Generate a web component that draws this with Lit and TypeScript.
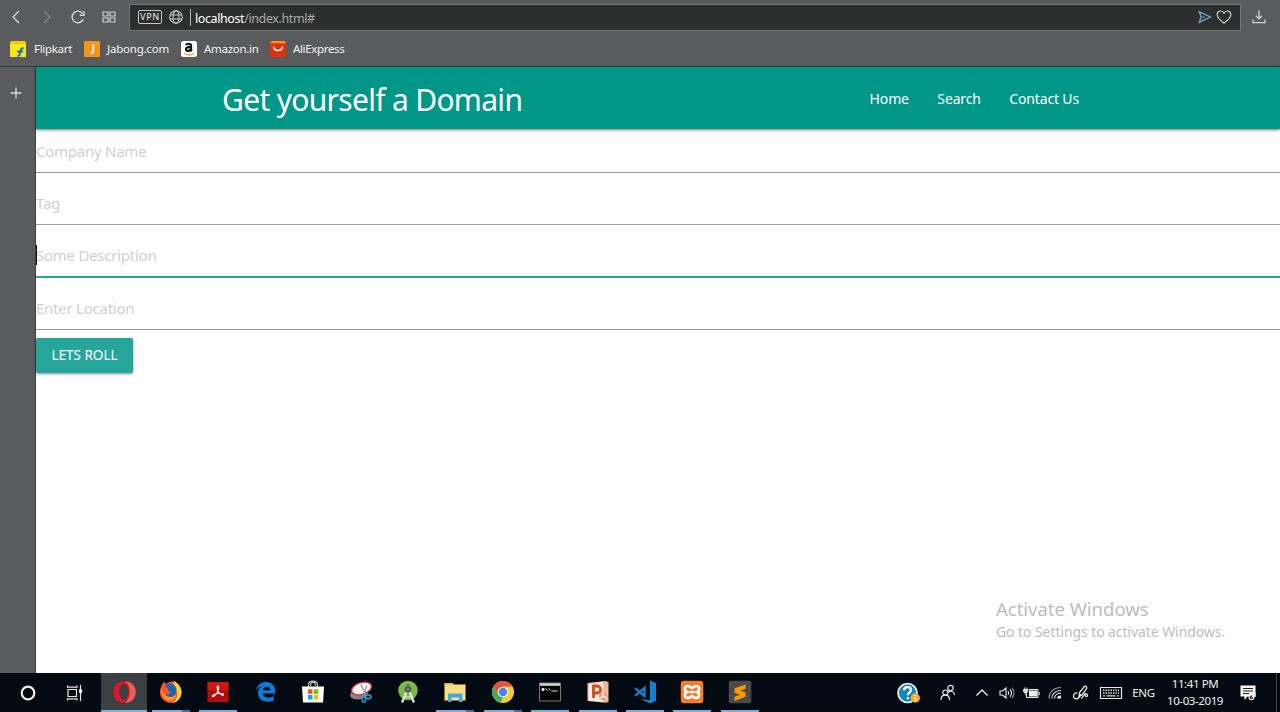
import { LitElement, html, css, svg } from "lit";
import { customElement } from "lit/decorators.js";

const icon = (w: number, h: number, body: unknown) =>
  html`<svg width=${w} height=${h} viewBox="0 0 ${w} ${h}" fill="none">${body}</svg>`;

const ui = {
  back: icon(16, 16, svg`<path d="M11 2 5 8l6 6" stroke="#d6d6d6" stroke-width="1.4"/>`),
  forward: icon(16, 16, svg`<path d="M5 2l6 6-6 6" stroke="#858687" stroke-width="1.4"/>`),
  reload: icon(16, 16, svg`<path d="M13.2 10.2A5.8 5.8 0 1 1 12.6 4.6" stroke="#d6d6d6" stroke-width="1.4"/><path d="M14 2v4.2H9.8" stroke="#d6d6d6" stroke-width="1.4"/>`),
  grid: icon(16, 16, svg`<path d="M2 3h5v4H2zM9 3h5v4H9zM2 9h5v4H2zM9 9h5v4H9z" stroke="#cfcfcf" stroke-width="1.2"/>`),
  globe: icon(16, 16, svg`<g stroke="#c9caca" stroke-width="1.1"><circle cx="8" cy="8" r="6.3"/><ellipse cx="8" cy="8" rx="3" ry="6.3"/><path d="M2 6h12M2 10h12"/></g>`),
  send: icon(16, 16, svg`<path d="M2.3 2.8 13.5 8 2.3 13.2 4 8z" stroke="#6fa9c6" stroke-width="1.3"/><path d="M4 8h4" stroke="#6fa9c6"/>`),
  heart: icon(16, 16, svg`<path d="M8 14.2C5 12 1.2 9 1.2 5.6 1.2 1.6 6.2.7 8 4.2 9.8.7 14.8 1.6 14.8 5.6 14.8 9 11 12 8 14.2z" stroke="#c4c4c4" stroke-width="1.2"/>`),
  download: icon(16, 16, svg`<path d="M8 1.5v8M5 6.800 8 9.800l3-3M2 10.500v3.200h12v-3.200" stroke="#d2d2d2" stroke-width="1.3"/>`),
  plus: icon(12, 12, svg`<path d="M6 .5v11M.5 6h11" stroke="#d8d8d8" stroke-width="1.3"/>`),
};

const bookmarks = [
  {
    label: "Flipkart", cls: "flipkart",
    glyph: icon(16, 16, svg`<path d="M0 1.500 1.500 0h13L16 1.500V16H0z" fill="#f8e71b"/><path d="M0 3 1.500 0h13L16 3z" fill="#f2c90e"/><path d="M7.500 15c1.500 0 2.300-1 2.700-3l.5-2.500c.3-1.700 1.200-2.500 3-2.300M7 10.600h6" stroke="#1f74ba" stroke-width="2"/>`),
  },
  {
    label: "Jabong.com", cls: "jabong",
    glyph: icon(16, 16, svg`<rect width="16" height="16" rx="1" fill="#f7941e"/><path d="M9.300 3.200v6.600c0 1.600-.9 2.300-2.800 2" stroke="#fff" stroke-width="1.800"/>`),
  },
  {
    label: "Amazon.in", cls: "amazon",
    glyph: icon(16, 16, svg`<rect width="16" height="16" rx="2.500" fill="#fff"/><path d="M5 4.300C5.600 2.300 10 2 10 4.800v3.700c0 .8.400 1.200 1 1.700M10 5.800c-3 0-5 .5-5 2.400 0 2.500 4.500 2.200 5-.7" stroke="#111" stroke-width="2.200"/><path d="M3 12.300c3 2.200 7.300 2.200 10 .2" stroke="#f5a11c" stroke-width="1.300"/>`),
  },
  {
    label: "AliExpress", cls: "ali",
    glyph: icon(16, 16, svg`<rect width="16" height="16" rx="2.500" fill="#e4310c"/><path d="M1.500 0h13L16 2.200H0z" fill="#f49a16"/><path d="M3.600 5.700c.6 5.200 8.200 5.200 8.800 0" stroke="#fff" stroke-width="1.500"/>`),
  },
];

const start = [
  icon(24, 24, svg`<circle cx="12" cy="12" r="6.300" stroke="#f2f2f2" stroke-width="2.200"/>`),
  icon(24, 24, svg`<g stroke="#e8e8e8" stroke-width="1.200"><path d="M5 8.500h8.500v7H5zM4.500 4.500v1.700h9.500V4.500M4.500 19.500v-1.700h9.500v1.700M17.500 4v16"/></g><path d="M16 8.500h3.200v3.200H16z" fill="#fff"/>`),
];

const apps = [
  { state: "active", glyph: icon(24, 24, svg`<circle cx="12" cy="12" r="10.800" fill="#d9182b"/><path d="M13 1.200a10.800 10.800 0 0 1 0 21.600c3-2 4.800-6 4.800-10.800S16 3.200 13 1.200z" fill="#f35b55"/><ellipse cx="12" cy="12" rx="4.600" ry="8" fill="#3c4043"/>`) },
  { state: "running stacked", glyph: icon(24, 24, svg`<path d="M3 5 5 1.500 7 4c3-3 7-2.500 8-2.500 4 1.500 8 6 7.500 11.500C22 19 17.500 23 12 23S1 18.500 1 12.500C1 9 2 6.500 3 5z" fill="#f4562b"/><path d="M15 1c3 1.500 8 6 7.500 12-.5 5-4 9-9 10 4-3 6-8 4-12C16 7 14 5 15 1z" fill="#ffcf2f"/><path d="M6 5.500C9 2 15 3 17 7.500c1.500 4-.5 9-4.500 9.500-3 .5-5.500-1-6-3l3 .5 3-2.500-3-1-.5-2.500z" fill="#1767b5"/><path d="M2.500 7c0 5 3.500 10 9.500 10 3 0 4.500-2 5-3 .5 5-4 7.500-8 6.500C4 19 1.500 13 2.500 7z" fill="#ff9424"/>`) },
  { state: "running", glyph: icon(24, 24, svg`<path d="M1.500 2h21v20h-21z" fill="#b40b0c"/><path d="M1.500 2h21v8h-21z" fill="#cf1711"/><path d="M11.600 6c1.900 0 .8 4.500-1.100 7.500-1.500 2.300-3.300 3.700-4 2.900-.8-1.200 3.200-2.700 6.900-2.900 2.900-.2 4.700.6 4 1.500-1 1.200-4.400-1.300-5.600-4.500-.8-2.300-.8-4.500-.2-4.500z" stroke="#fff" stroke-width="1.100"/>`) },
  { state: "", glyph: icon(24, 24, svg`<path d="M2.200 10.700C3 5 7 2 12 2c5.800 0 9.300 4 9.300 9v2.600H8.600c.3 4.400 6.500 5.300 11.200 2.500v4.300c-7 3.400-15.800.7-15.800-7.300 0-3.300 2-5.900 5-7.300C5.600 6.600 3.500 8.200 2.200 10.700zM8.900 10.200h7.400c0-4.600-6.700-4.600-7.400 0z" fill="#0d7bdb"/>`) },
  { state: "", glyph: icon(24, 24, svg`<path d="M7.500 7V4.500c0-4.500 9-4.500 9 0V7M9.700 6V4c0-2.300 4.600-2.300 4.600 0v2" stroke="#bfc2c5" stroke-width="1.200"/><path d="M1 6.500h22L22 22.500H2z" fill="#fff"/><path d="M7 9.300h4.500v4.500H7z" fill="#f25022"/><path d="M12.800 9.300h4.500v4.500h-4.500z" fill="#7fba00"/><path d="M7 15h4.500v4.500H7z" fill="#00a4ef"/><path d="M12.800 15h4.500v4.500h-4.500z" fill="#ffb900"/>`) },
  { state: "", glyph: icon(24, 24, svg`<ellipse cx="10" cy="14.500" rx="9" ry="4.800" transform="rotate(-8 10 14.500)" fill="#8b8585"/><ellipse cx="12.500" cy="8.500" rx="10.300" ry="5.800" transform="rotate(-17 12.500 8.500)" fill="#f7f4f5" stroke="#c63542" stroke-width="1.300"/><path d="M12 4.500 17.200 16M17.800 5.500 14.500 17" stroke="#8496a3" stroke-width="1.200"/><ellipse cx="14.800" cy="19.500" rx="1.700" ry="2.700" stroke="#2c91be" stroke-width="1.700"/><ellipse cx="19.300" cy="16.800" rx="2.700" ry="2" stroke="#2c91be" stroke-width="1.700"/>`) },
  { state: "", glyph: icon(24, 24, svg`<circle cx="12" cy="10.500" r="9.800" fill="#78b94a"/><path d="M10.700 11.500 6 22.500M13.300 11.500 18 22.500" stroke="#e7e9e7" stroke-width="2.200"/><path d="M8 16q4 2.500 8 0" stroke="#e7e9e7" stroke-width="1.200"/><circle cx="12" cy="9.500" r="3.300" fill="#4b5a4e"/><circle cx="12" cy="9.500" r="1.200" fill="#84a271"/><path d="M12 4.500v2" stroke="#4b5a4e" stroke-width="2"/>`) },
  { state: "running stacked", glyph: icon(24, 24, svg`<path d="M1.500 3h8l1.500 1.500h11.500v16H1.500z" fill="#fbdf87"/><path d="M1.500 3h8l1 2h-9z" fill="#e9b93e"/><path d="M5 22v-8.500h14.500V22H16v-4.500H8.500V22z" fill="#45a9de"/>`) },
  { state: "running stacked", glyph: icon(24, 24, svg`<circle cx="12" cy="12" r="11" fill="#f9cd32"/><path d="M2.500 6.500A11 11 0 0 1 21.500 6.500H12L7.200 14.500z" fill="#e35243"/><path d="M2.500 6.500 7.500 15l4.500 2-2 5.800A11 11 0 0 1 2.500 6.500z" fill="#4aa85c"/><circle cx="12" cy="12" r="5.300" fill="#f4f4f4"/><circle cx="12" cy="12" r="4.200" fill="#4384ee"/>`) },
  { state: "running", glyph: icon(24, 24, svg`<path d="M1.500 3h21v18h-21z" fill="#050505" stroke="#777"/><path d="M2 3.200h20v2.600H2z" fill="#d4d4d4"/><path d="M4 8.500h2v2H4zM7.500 8.300l2 2.400M10.800 8.300l1.500 2.400M13.500 11h6" fill="#ddd" stroke="#ddd"/>`) },
  { state: "running", glyph: icon(24, 24, svg`<path d="M1.500 3 19 1l3.500 1v20l-3 .8L1.500 21z" fill="#f3b79f"/><path d="M2.500 4 17 2v20l-14.500-1.500z" fill="#fbece5"/><path d="M7.500 18V6h2.800c5.700 0 5.700 7 0 7H8" stroke="#cf4a1c" stroke-width="2.800"/><circle cx="17" cy="16" r="4.200" fill="#ea9c7e"/><path d="M17 16v-4M17 16l3.500 2M17 16l-3 2.500" stroke="#fff" stroke-width="1.100"/>`) },
  { state: "running", glyph: icon(24, 24, svg`<path d="m17 .5 6 2.500v18l-6 2.500L7.500 19 17 20.200z" fill="#1681cf"/><path d="M2 8.200 11.500 16V8L2 15.800" stroke="#1681cf" stroke-width="2.300"/>`) },
  { state: "running", glyph: icon(24, 24, svg`<rect x=".8" y=".8" width="22.500" height="22.500" rx="3" fill="#f47c2b"/><path d="M8 6c-4 0-4 5-1 6-3 1-3 6 1 6 2.500 0 2.500-2 4-2s1.500 2 4 2c4 0 4-5 1-6 3-1 3-6-1-6-2.500 0-2.500 2-4 2s-1.500-2-4-2z" stroke="#fff" stroke-width="2.600"/><path d="M10 12h4" stroke="#fff" stroke-width="2.400"/>`) },
  { state: "running", glyph: icon(24, 24, svg`<rect x=".8" y=".8" width="22.500" height="22.500" rx="1.500" fill="#4b4b4c"/><path d="m6.500 8.500 11-4v4.200l-5.200 2 5.200 1.700v4.300l-11 4.300v-4.300l5.300-2-5.300-2z" fill="#ff9a00"/>`) },
];

const tray = {
  help: icon(24, 24, svg`<circle cx="11.500" cy="12" r="9.500" fill="#1787bf" stroke="#f1f4f6" stroke-width="1.700"/><path d="M8 9.300c.2-4.300 7-4 7-.3 0 2.500-3.200 2.700-3.200 5.300M11.800 16v2.300" stroke="#fff" stroke-width="2.200"/><circle cx="19.300" cy="17" r="4.700" fill="#f4ae2b"/><path d="M19.300 14v1.300M19.300 16.300v3.500" stroke="#fff3cf" stroke-width="1.300"/>`),
  people: icon(18, 18, svg`<g stroke="#e6e6e6" stroke-width="1.200"><circle cx="11.500" cy="4" r="2.700"/><circle cx="6.300" cy="8.500" r="2.500"/><path d="M2 16c0-6.500 8.500-6.500 8.500 0M9.300 8.500c2.500-2.500 6-1 6.200 2.500"/></g>`),
  chevron: icon(16, 16, svg`<path d="M2.500 10.500 8 5l5.500 5.500" stroke="#eee" stroke-width="1.300"/>`),
  volume: icon(18, 16, svg`<path d="M2 6h2.500L8 3v10l-3.500-3H2z" stroke="#eee" stroke-width="1.100"/><path d="M10 6q1.500 2 0 4M12 4.200q3 3.800 0 7.600" stroke="#eee" stroke-width="1.100"/><path d="M14 2.700q4 5.300 0 10.600" stroke="#888" stroke-width="1.100"/>`),
  battery: icon(18, 16, svg`<path d="M7 5.500h8.300v6H7z" fill="#f2f2f2"/><path d="M6.500 4.500h9.500v8H4.500V9M17.200 7v3" stroke="#eee"/><path d="M1.500 4.500h4.200v2l-1 1.500H2.700l-1.200-1.500zM3.700 8v2M2.700 2.500v2M4.900 2.500v2" fill="#ddd" stroke="#ddd"/>`),
  wifi: icon(16, 16, svg`<g stroke-width="1.200"><path d="M2 13.500C2 7 7 2.500 14 2.500" stroke="#999"/><path d="M4.800 13.500c0-4.500 3.700-8 9.200-8" stroke="#ccc"/><path d="M7.500 13.500c0-3 2.500-5.300 6.500-5.300" stroke="#e2e2e2"/><path d="M10 13.500c0-1.700 1.500-3 4-3v3z" fill="#eee"/></g>`),
  pen: icon(18, 18, svg`<path d="M5.500 9c-4.500-1-5.500 6-1 5.800 3-.3 3.500-3 4.500-4.800M7 12.500l.5-4L12.500 2.300q2-.8 2.300 1.700L10 11zM9 14.500c2.500-.5 2-4 4.500-4.500 2-.3 3 2 1 2.500-1.500.2-1.500-2-1.500-3.500" stroke="#eee" stroke-width="1.200"/>`),
  keyboard: icon(24, 16, svg`<path d="M1.500 2.500h21v11h-21z" stroke="#e8e8e8" stroke-width="1.200"/><path d="M4 5.300h16M4 8h16" stroke="#dcdcdc" stroke-width="1.500" stroke-dasharray="1.500 1"/><path d="M4 10.800h2M7.500 10.800h9M18 10.800h2" stroke="#dcdcdc" stroke-width="1.300"/>`),
  note: icon(18, 18, svg`<path d="M1.500 1.500h15v11H8.500L5.500 16v-3.500h-4z" fill="#f7f7f7"/><path d="M4 4.500h10M4 7h10M4 9.500h6" stroke="#1b2025"/><circle cx="12.500" cy="13.300" r="2.400" fill="#0a0e13" stroke="#eee" stroke-width="1.200"/><path d="m12.500 13.500 3.500-3.500v3" stroke="#eee" stroke-width="1.200"/>`),
};

@customElement("app-root")
export class AppRoot extends LitElement {
  static styles = css`
    :host { display: flex; flex-direction: column; width: 1280px; height: 712px; overflow: hidden; background: #fff; font-family: "Noto Sans", "Open Sans", sans-serif; white-space: nowrap; }
    * { box-sizing: border-box; }
    svg { display: block; flex: none; }
    .chrome { flex: none; height: 67px; background: #5a5b5d; border-bottom: 1px solid #2d3c3c; }
    .toolbar { display: flex; align-items: center; height: 34px; padding: 0 13px 0 8px; }
    .nav { display: grid; grid-template-columns: 31px 31px 31px 28px; }
    .address { display: flex; align-items: center; width: 1112px; height: 27px; padding: 0 8px; background: #2d2f2e; border: 1px solid #747675; }
    .vpn { width: 24px; height: 14px; margin-right: 6px; border: 1px solid #c5c6c6; border-radius: 2px; color: #d8d8d8; font: 500 9px/12px "Noto Sans", sans-serif; text-align: center; letter-spacing: 0.6px; }
    .divider { width: 1px; height: 17px; margin: 0 4px 0 6px; background: #b5b6b6; }
    .url { flex: 1; padding-top: 2px; color: #a9aaaa; font-size: 12.5px; letter-spacing: -0.4px; }
    .host { color: #fff; }
    .end { display: flex; gap: 3px; }
    .download { margin-left: 10px; }
    .bookmarks { display: flex; align-items: center; height: 30px; padding-left: 10px; color: #f4f4f4; font-size: 11.5px; }
    .bookmark { display: flex; align-items: center; gap: 8px; line-height: 14px; }
    .bookmark span { padding-bottom: 1px; }
    .flipkart { width: 74px; letter-spacing: -0.3px; }
    .jabong { width: 97px; gap: 7px; letter-spacing: -0.22px; }
    .amazon { width: 89px; gap: 7px; letter-spacing: -0.3px; }
    .ali { gap: 7px; letter-spacing: -0.35px; }
    .middle { flex: 1; display: flex; min-height: 0; }
    .side { flex: none; width: 36px; padding: 20px 0 0 10px; background: #5a5b5d; border-right: 1px solid #3c3e3f; }
    .page { position: relative; flex: 1; background: #fff; }
    .header { display: flex; align-items: center; justify-content: space-between; height: 62px; padding: 0 201px 0 186px; background: #009688; color: #fff; box-shadow: 0 1px 3px rgba(0, 0, 0, 0.55); }
    .title { padding-top: 2px; font-size: 30px; letter-spacing: -0.69px; }
    .links { display: flex; gap: 28.5px; font-size: 14px; }
    .link { letter-spacing: -0.15px; }
    .form { display: flex; flex-direction: column; align-items: flex-start; }
    .field { width: 100%; height: 44px; margin-bottom: 8px; padding-top: 10px; border-bottom: 1px solid #9b9b9b; color: #cfcfcf; font-size: 15px; line-height: 24px; letter-spacing: -0.25px; }
    .focused { height: 45px; border-bottom: 2px solid #26a69a; }
    .caret { position: absolute; left: 0; top: 178px; width: 1px; height: 20px; background: #111; }
    .button { width: 97px; height: 35px; border-radius: 2px; background: #26a69a; color: #fff; font-size: 13.5px; line-height: 35px; text-align: center; box-shadow: 0 1px 3px rgba(0, 0, 0, 0.45); }
    .watermark { position: absolute; left: 960px; top: 529px; color: #bcbcbc; }
    .wm-title { font-size: 18.5px; line-height: 26px; letter-spacing: -0.02px; }
    .wm-text { font-size: 14px; line-height: 19px; letter-spacing: -0.08px; }
    .taskbar { flex: none; display: flex; height: 39px; background: #040a11; color: #f2f2f2; }
    .start { flex: none; display: grid; grid-template-columns: 47px 47px; width: 100px; padding-left: 4px; align-items: center; justify-items: center; }
    .apps { display: flex; flex: 1; }
    .app { display: flex; flex-direction: column; align-items: center; justify-content: space-between; flex: none; width: 47.4px; padding-top: 7px; }
    .active { background: linear-gradient(90deg, transparent 1px, #3c4043 1px); }
    .bar { width: 38px; height: 2px; }
    .running .bar { background: #76b0e0; }
    .active .bar { width: 46px; background: #76b0e0; }
    .stacked .bar { background: linear-gradient(90deg, #76b0e0 30px, #46719a 30px); }
    .tray { flex: none; display: grid; grid-template-columns: 40px 40px 27px 23px 25px 24px 28px 32px 33px 70px 36px; align-items: center; justify-items: center; width: 388px; font-size: 11.5px; }
    .eng { letter-spacing: -0.3px; }
    .clock { padding-bottom: 2px; text-align: center; line-height: 17px; letter-spacing: -0.4px; }
    .peek { flex: none; width: 4px; border-left: 1px solid #3f454b; }
  `;

  render() {
    return html`
      <div class="chrome">
        <div class="toolbar">
          <div class="nav">${ui.back}${ui.forward}${ui.reload}${ui.grid}</div>
          <div class="address">
            <div class="vpn">VPN</div>
            ${ui.globe}
            <div class="divider"></div>
            <div class="url"><span class="host">localhost</span>/index.html#</div>
            <div class="end">${ui.send}${ui.heart}</div>
          </div>
          <div class="download">${ui.download}</div>
        </div>
        <div class="bookmarks">
          ${bookmarks.map((b) => html`<div class="bookmark ${b.cls}">${b.glyph}<span>${b.label}</span></div>`)}
        </div>
      </div>
      <div class="middle">
        <div class="side">${ui.plus}</div>
        <div class="page">
          <div class="header">
            <div class="title">Get yourself a Domain</div>
            <div class="links">
              <span class="link">Home</span><span class="link">Search</span><span class="link">Contact Us</span>
            </div>
          </div>
          <div class="form">
            <div class="field">Company Name</div>
            <div class="field">Tag</div>
            <div class="field focused">Some Description</div>
            <div class="field">Enter Location</div>
            <div class="button">LETS ROLL</div>
          </div>
          <div class="caret"></div>
          <div class="watermark">
            <div class="wm-title">Activate Windows</div>
            <div class="wm-text">Go to Settings to activate Windows.</div>
          </div>
        </div>
      </div>
      <div class="taskbar">
        <div class="start">${start}</div>
        <div class="apps">
          ${apps.map((a) => html`<div class="app ${a.state}">${a.glyph}<div class="bar"></div></div>`)}
        </div>
        <div class="tray">
          ${tray.help}${tray.people}${tray.chevron}${tray.volume}${tray.battery}${tray.wifi}${tray.pen}${tray.keyboard}
          <span class="eng">ENG</span>
          <div class="clock"><div>11:41 PM</div><div>10-03-2019</div></div>
          ${tray.note}
        </div>
        <div class="peek"></div>
      </div>
    `;
  }
}
